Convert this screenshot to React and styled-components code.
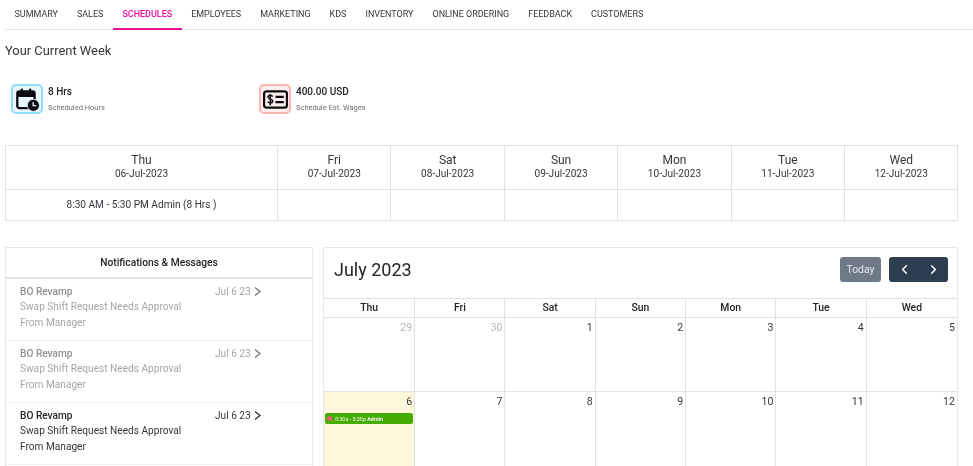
import React from 'react';
import styled, { createGlobalStyle } from 'styled-components';
import { ChevronLeft, ChevronRight } from 'lucide-react';

const GlobalStyle = createGlobalStyle`
  html, body {
    margin: 0;
    padding: 0;
    background: #fff;
    font-family: Roboto, "Liberation Sans", sans-serif;
    color: #212529;
  }
`;

const Page = styled.div`
  height: 466px;
  overflow: hidden;
  padding-left: 5px;
  filter: blur(0.3px);
`;

const Tabs = styled.nav`
  display: flex;
  height: 29px;
  border-bottom: 1px solid #e2e4e8;
`;

const Tab = styled.div`
  padding: 9px 9.5px 0;
  font-size: 8.97px;
  line-height: 11px;
  color: ${(p) => (p.$active ? '#ec0f9f' : '#33373c')};
  font-weight: ${(p) => (p.$active ? 500 : 400)};
  border-bottom: 2px solid ${(p) => (p.$active ? '#ec0f9f' : 'transparent')};
  box-sizing: border-box;
  height: 30px;
`;

const Title = styled.h2`
  margin: 13px 0 0;
  font-size: 12.9px;
  line-height: 16px;
  font-weight: 400;
  color: #33373c;
`;

const Stats = styled.div`
  display: flex;
  margin: 25px 0 0 6px;
  height: 36px;
`;

const Stat = styled.div`
  display: flex;
  width: 248px;
  gap: 5px;
`;

const IconBox = styled.div`
  width: 32px;
  height: 30px;
  box-sizing: border-box;
  border-radius: 5px;
  border: 2px solid ${(p) => p.$border};
  background: ${(p) => p.$bg};
  display: flex;
  align-items: center;
  justify-content: center;
`;

const StatText = styled.div`
  display: flex;
  flex-direction: column;
  padding-top: 1px;
`;

const StatValue = styled.div`
  font-size: 10px;
  line-height: 13px;
  font-weight: 500;
  color: #212529;
`;

const StatLabel = styled.div`
  font-size: 7.5px;
  line-height: 10px;
  margin-top: 5px;
  color: #6c7075;
`;

const WeekTable = styled.div`
  display: grid;
  grid-template-columns: 272.1px repeat(6, 113.4px);
  width: 953px;
  margin-top: 25px;
  border-top: 1px solid #dfe1e4;
  border-left: 1px solid #dfe1e4;
  box-sizing: border-box;
`;

const WeekHead = styled.div`
  height: 44px;
  box-sizing: border-box;
  border-right: 1px solid #dfe1e4;
  border-bottom: 1px solid #dfe1e4;
  text-align: center;
  padding-top: 7px;
  color: #33373c;
`;

const WeekDay = styled.div`
  font-size: 12px;
  line-height: 14px;
`;

const WeekDate = styled.div`
  font-size: 10.1px;
  line-height: 13px;
`;

const WeekCell = styled.div`
  height: 31px;
  box-sizing: border-box;
  border-right: 1px solid #dfe1e4;
  border-bottom: 1px solid #dfe1e4;
  text-align: center;
  font-size: 10.1px;
  line-height: 29px;
  color: #33373c;
`;

const Lower = styled.div`
  display: flex;
  gap: 10px;
  margin-top: 26px;
  width: 953px;
  align-items: flex-start;
`;

const Notifications = styled.section`
  width: 308px;
  height: 240px;
  flex: none;
  box-sizing: border-box;
  border: 1px solid #e6e8eb;
`;

const NotifHeader = styled.div`
  height: 31px;
  box-sizing: border-box;
  border-bottom: 2px solid #e1e5ea;
  text-align: center;
  font-size: 10.25px;
  font-weight: 500;
  line-height: 29px;
  color: #212529;
`;

const NotifRow = styled.div`
  display: flex;
  height: 62px;
  box-sizing: border-box;
  padding: 5px 0 0 14px;
  border-bottom: 1px solid #eceef0;
  color: ${(p) => (p.$read ? '#a4a6a9' : '#33373c')};
`;

const NotifBody = styled.div`
  width: 195px;
  font-size: 10.15px;
  line-height: 15.4px;
`;

const NotifTitle = styled.div`
  font-weight: 500;
  color: ${(p) => (p.$read ? '#8f9194' : '#212529')};
`;

const NotifDate = styled.div`
  display: flex;
  align-items: flex-start;
  gap: 3px;
  font-size: 10.15px;
  line-height: 15.4px;
  svg {
    margin-top: 3px;
    color: ${(p) => (p.$read ? '#6f7175' : '#212529')};
  }
`;

const Calendar = styled.section`
  flex: 1;
  box-sizing: border-box;
  border: 1px solid #e6e8eb;
  border-bottom: none;
`;

const CalToolbar = styled.div`
  display: flex;
  align-items: center;
  height: 50px;
  padding: 0 9px 0 10px;
  box-sizing: border-box;
`;

const CalTitle = styled.h3`
  flex: 1;
  margin: 0 0 7px;
  font-size: 18px;
  font-weight: 400;
  color: #212529;
`;

const TodayButton = styled.div`
  width: 41px;
  height: 25px;
  margin: 0 8px 7px 0;
  border-radius: 3px;
  background: #6e7a88;
  color: #e6e9ec;
  font-size: 10.4px;
  line-height: 25px;
  text-align: center;
`;

const NavButton = styled.div`
  width: 59px;
  height: 25px;
  margin-bottom: 7px;
  padding: 0 7.5px;
  box-sizing: border-box;
  border-radius: 3px;
  background: #2c3e50;
  color: #fff;
  display: flex;
  align-items: center;
  justify-content: space-between;
`;

const CalGrid = styled.div`
  display: grid;
  grid-template-columns: 91.2px repeat(6, 1fr);
  grid-template-rows: 19px 74px 90px;
  border-top: 1px solid #dfe1e4;
`;

const DowCell = styled.div`
  box-sizing: border-box;
  border-right: 1px solid #dfe1e4;
  border-bottom: 1px solid #dfe1e4;
  text-align: center;
  font-size: 10.4px;
  font-weight: 500;
  line-height: 18px;
  color: #212529;
  &:nth-child(7) {
    border-right: none;
  }
`;

const DayCell = styled.div`
  box-sizing: border-box;
  padding: 3px 2px 0 1px;
  border-right: 1px solid #dfe1e4;
  border-bottom: 1px solid #dfe1e4;
  background: ${(p) => (p.$today ? '#fef7dc' : '#fff')};
  &:nth-child(7n) {
    border-right: none;
  }
`;

const DayNumber = styled.div`
  text-align: right;
  font-size: 10.6px;
  line-height: 13px;
  color: ${(p) => (p.$muted ? '#b4b6b9' : '#33373c')};
`;

const CalEvent = styled.div`
  display: flex;
  align-items: center;
  gap: 3px;
  height: 11px;
  margin: 5px -1px 0 0;
  padding-left: 2px;
  border-radius: 2px;
  background: #44ad00;
  color: #f2f8ec;
  font-size: 5.4px;
  white-space: nowrap;
  b {
    font-weight: 700;
  }
`;

const EventDot = styled.span`
  width: 5px;
  height: 5px;
  border-radius: 50%;
  background: #f25c6e;
`;

const CalendarClockIcon = () => (
  <svg width="25" height="25" viewBox="0 0 24 24">
    <rect x="2.2" y="4.200" width="16.6" height="16" rx="2" fill="none" stroke="#0b0b0f" strokeWidth="2.200" />
    <path d="M2.200 9.600h16.600V6a2 2 0 0 0-2-2H4.200a2 2 0 0 0-2 2z" fill="#0b0b0f" />
    <rect x="5.400" y="1.400" width="2.200" height="4.600" rx="1.100" fill="#0b0b0f" />
    <rect x="13.400" y="1.400" width="2.200" height="4.600" rx="1.100" fill="#0b0b0f" />
    <circle cx="17.600" cy="17.600" r="5.800" fill="#0b0b0f" stroke="#e9f7ff" strokeWidth="0.800" />
    <path d="M17.400 14.400v3.400h3" fill="none" stroke="#e9f7ff" strokeWidth="1.200" />
  </svg>
);

const BillIcon = () => (
  <svg width="25" height="19" viewBox="0 0 24 18">
    <rect x="1" y="1.200" width="22" height="15.600" rx="2.400" fill="none" stroke="#0b0b0f" strokeWidth="2.200" />
    <path
      d="M9.200 6.200c-.4-.9-1.200-1.300-2.200-1.300-1.200 0-2.200.6-2.200 1.800 0 2.500 4.500 1.300 4.500 3.800 0 1.200-1.100 1.800-2.300 1.800-1.100 0-2-.5-2.400-1.400M7 3.600v10.800"
      fill="none"
      stroke="#0b0b0f"
      strokeWidth="1.400"
    />
    <path d="M12 6.500h8M12 11.500h8" stroke="#0b0b0f" strokeWidth="2.200" />
  </svg>
);

const RowChevron = () => (
  <svg width="7" height="9" viewBox="0 0 7 9">
    <path d="M1 .5l5 4-5 4" fill="none" stroke="currentColor" strokeWidth="1.200" />
  </svg>
);

const tabs = ['SUMMARY', 'SALES', 'SCHEDULES', 'EMPLOYEES', 'MARKETING', 'KDS', 'INVENTORY', 'ONLINE ORDERING', 'FEEDBACK', 'CUSTOMERS'];

const week = [
  ['Thu', '06-Jul-2023'],
  ['Fri', '07-Jul-2023'],
  ['Sat', '08-Jul-2023'],
  ['Sun', '09-Jul-2023'],
  ['Mon', '10-Jul-2023'],
  ['Tue', '11-Jul-2023'],
  ['Wed', '12-Jul-2023'],
];

const notifications = [{ read: true }, { read: true }, { read: false }];

const days = [
  { n: 29, muted: true },
  { n: 30, muted: true },
  { n: 1 },
  { n: 2 },
  { n: 3 },
  { n: 4 },
  { n: 5 },
  { n: 6, today: true, event: true },
  { n: 7 },
  { n: 8 },
  { n: 9 },
  { n: 10 },
  { n: 11 },
  { n: 12 },
];

export default function App() {
  return (
    <Page>
      <GlobalStyle />
      <Tabs>
        {tabs.map((t) => (
          <Tab key={t} $active={t === 'SCHEDULES'}>{t}</Tab>
        ))}
      </Tabs>
      <Title>Your Current Week</Title>
      <Stats>
        <Stat>
          <IconBox $border="#8fdcfb" $bg="#e9f7ff"><CalendarClockIcon /></IconBox>
          <StatText>
            <StatValue>8 Hrs</StatValue>
            <StatLabel>Scheduled Hours</StatLabel>
          </StatText>
        </Stat>
        <Stat>
          <IconBox $border="#ffb3b0" $bg="#ffeeed"><BillIcon /></IconBox>
          <StatText>
            <StatValue>400.00 USD</StatValue>
            <StatLabel>Schedule Est. Wages</StatLabel>
          </StatText>
        </Stat>
      </Stats>
      <WeekTable>
        {week.map(([day, date]) => (
          <WeekHead key={day}>
            <WeekDay>{day}</WeekDay>
            <WeekDate>{date}</WeekDate>
          </WeekHead>
        ))}
        {week.map(([day], i) => (
          <WeekCell key={day}>{i === 0 ? '8:30 AM - 5:30 PM Admin (8 Hrs )' : ''}</WeekCell>
        ))}
      </WeekTable>
      <Lower>
        <Notifications>
          <NotifHeader>Notifications &amp; Messages</NotifHeader>
          {notifications.map((n, i) => (
            <NotifRow key={i} $read={n.read}>
              <NotifBody>
                <NotifTitle $read={n.read}>BO Revamp</NotifTitle>
                Swap Shift Request Needs Approval
                <br />
                From Manager
              </NotifBody>
              <NotifDate $read={n.read}>
                Jul 6 23
                <RowChevron />
              </NotifDate>
            </NotifRow>
          ))}
        </Notifications>
        <Calendar>
          <CalToolbar>
            <CalTitle>July 2023</CalTitle>
            <TodayButton>Today</TodayButton>
            <NavButton>
              <ChevronLeft size={15} strokeWidth={2.5} />
              <ChevronRight size={15} strokeWidth={2.5} />
            </NavButton>
          </CalToolbar>
          <CalGrid>
            {week.map(([day]) => (
              <DowCell key={day}>{day}</DowCell>
            ))}
            {days.map((d) => (
              <DayCell key={d.n} $today={d.today}>
                <DayNumber $muted={d.muted}>{d.n}</DayNumber>
                {d.event && (
                  <CalEvent>
                    <EventDot />
                    <span>8:30a - 5:30p <b>Admin</b></span>
                  </CalEvent>
                )}
              </DayCell>
            ))}
          </CalGrid>
        </Calendar>
      </Lower>
    </Page>
  );
}
